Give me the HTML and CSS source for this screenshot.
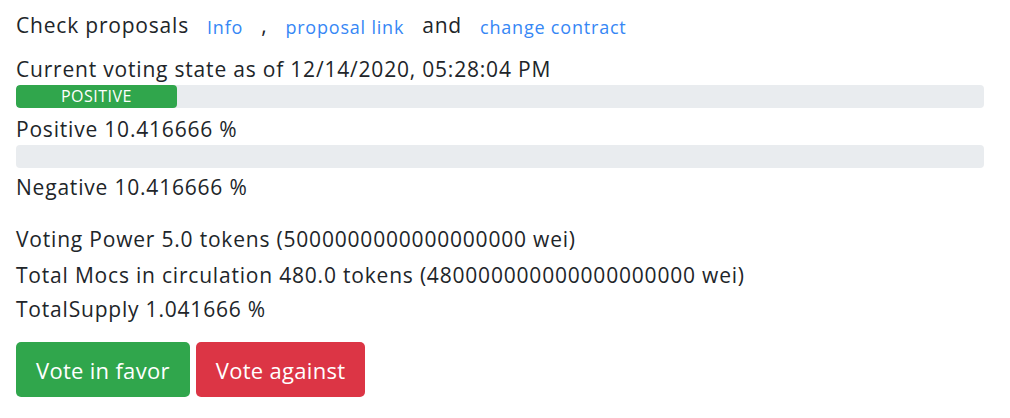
FILE: index.html
```html
<!DOCTYPE html>
<html lang="en">
<head>
    <meta charset="UTF-8">
    <meta name="viewport" content="width=device-width, initial-scale=1.0">
    <title>Voting</title>
    <link rel="stylesheet" href="styles.css">
</head>
<body>
    <div class="container">
        <div class="line title">
            <span>Check proposals</span>
            <a href="#" class="small-link">Info</a>
            <span>,</span>
            <a href="#" class="small-link">proposal link</a>
            <span>and</span>
            <a href="#" class="small-link">change contract</a>
        </div>
        <div class="line state">Current voting state as of 12/14/2020, 05:28:04 PM</div>

        <div class="progress">
            <div class="progress-bar" style="width: 161px">POSITIVE</div>
        </div>
        <div class="line positive">Positive 10.416666 %</div>

        <div class="progress"></div>
        <div class="line negative">Negative 10.416666 %</div>

        <div class="stats">
            <div class="line">Voting Power 5.0 tokens (5000000000000000000 wei)</div>
            <div class="line mocs">Total Mocs in circulation 480.0 tokens (480000000000000000000 wei)</div>
            <div class="line supply">TotalSupply 1.041666 %</div>
        </div>

        <div class="buttons">
            <button class="btn btn-green">Vote in favor</button>
            <button class="btn btn-red">Vote against</button>
        </div>
    </div>
</body>
</html>
```

FILE: styles.css
```css
body, html {
    margin: 0;
    background: #fff;
}

.container {
    padding: 10px 0 0 16px;
    width: 968px;
    font-family: "Open Sans", "Noto Sans", sans-serif;
    font-size: 21px;
    letter-spacing: 0.8px;
    color: #212529;
}

.line {
    height: 30px;
    line-height: 30px;
    white-space: nowrap;
}

.title {
    display: flex;
    align-items: baseline;
    gap: 18px;
}

.state {
    margin-top: 14px;
}

.small-link {
    font-size: 18px;
    color: #3687f5;
    text-decoration: none;
    position: relative;
    top: 1px;
}

.progress {
    height: 23px;
    margin-top: 1px;
    background-color: #e9ecef;
    border-radius: 4px;
    display: flex;
    overflow: hidden;
}

.progress-bar {
    background-color: #30a64c;
    color: #fff;
    font-size: 16px;
    letter-spacing: 0.5px;
    line-height: 23px;
    text-align: center;
    border-radius: 4px;
}

.positive {
    margin-top: 6px;
}

.negative {
    margin-top: 4px;
}

.stats {
    margin-top: 22px;
}

.mocs {
    margin-top: 6px;
}

.supply {
    margin-top: 4px;
}

.buttons {
    display: flex;
    gap: 6px;
    margin-top: 18px;
}

.btn {
    font-family: inherit;
    font-size: 22px;
    letter-spacing: 0.3px;
    height: 55px;
    padding: 0 20px;
    border: none;
    border-radius: 5px;
    color: #fff;
}

.btn-green {
    background-color: #30a64c;
}

.btn-red {
    background-color: #dc3545;
}
```
